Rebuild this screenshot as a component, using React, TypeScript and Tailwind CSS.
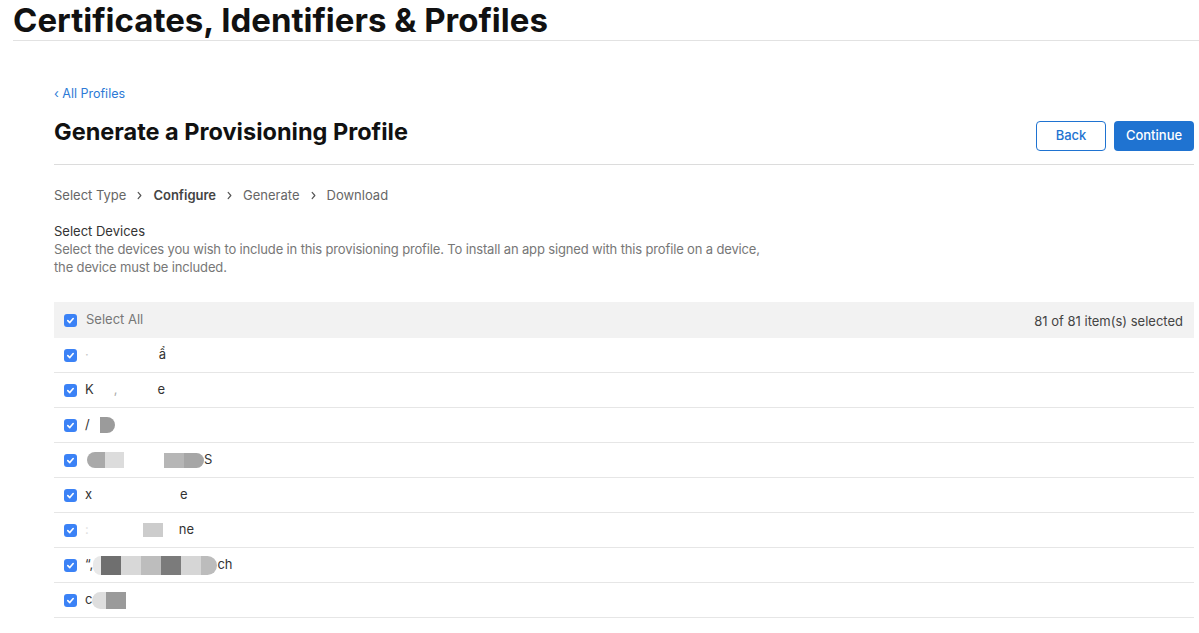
import React from "react";

type Seg =
  | { t: string; c?: string }
  | { gap: number }
  | { blocks: { w: number; c: string; r?: "l" | "r" }[]; h: number };

const rows: Seg[][] = [
  [{ t: "·", c: "text-[#c8c8c8]" }, { gap: 70 }, { t: "ẩ" }],
  [{ t: "K" }, { gap: 20 }, { t: ",", c: "text-[#aaa]" }, { gap: 40 }, { t: "e" }],
  [{ t: "/" }, { gap: 10 }, { blocks: [{ w: 15, c: "bg-[#9b9b9b]", r: "r" }], h: 16 }],
  [
    { gap: 2 },
    { blocks: [{ w: 18, c: "bg-[#a9a9a9]", r: "l" }, { w: 19, c: "bg-[#dcdcdc]" }], h: 16 },
    { gap: 40 },
    { blocks: [{ w: 20, c: "bg-[#b6b6b6]" }, { w: 20, c: "bg-[#a6a6a6]", r: "r" }], h: 15 },
    { t: "S" },
  ],
  [{ t: "x" }, { gap: 88 }, { t: "e" }],
  [{ t: ":", c: "text-[#e0e0e0]" }, { gap: 54 }, { blocks: [{ w: 20, c: "bg-[#cccccc]" }], h: 14 }, { gap: 16 }, { t: "ne" }],
  [
    { t: "“," },
    {
      blocks: [
        { w: 8, c: "bg-[#e8e8e8]", r: "l" },
        { w: 20, c: "bg-[#6f6f6f]" },
        { w: 20, c: "bg-[#d8d8d8]" },
        { w: 20, c: "bg-[#bdbdbd]" },
        { w: 20, c: "bg-[#7b7b7b]" },
        { w: 20, c: "bg-[#d6d6d6]" },
        { w: 16, c: "bg-[#bcbcbc]", r: "r" },
      ],
      h: 19,
    },
    { t: "ch" },
  ],
  [{ t: "c" }, { blocks: [{ w: 14, c: "bg-[#dedede]", r: "l" }, { w: 20, c: "bg-[#9a9a9a]" }], h: 17 }],
];

const gapClass: Record<number, string> = {
  2: "w-[2px]",
  10: "w-[10px]",
  16: "w-[16px]",
  20: "w-[20px]",
  40: "w-[40px]",
  54: "w-[54px]",
  70: "w-[70px]",
  88: "w-[88px]",
};

const blockW: Record<number, string> = {
  8: "w-[8px]",
  14: "w-[14px]",
  15: "w-[15px]",
  16: "w-[16px]",
  18: "w-[18px]",
  19: "w-[19px]",
  20: "w-[20px]",
};

const blockH: Record<number, string> = {
  14: "h-[14px]",
  15: "h-[15px]",
  16: "h-[16px]",
  17: "h-[17px]",
  19: "h-[19px]",
};

function Check() {
  return (
    <span className="w-[13px] h-[13px] rounded-[3px] bg-[#3b82f6] flex items-center justify-center shrink-0">
      <svg width="9" height="9" viewBox="0 0 10 10" fill="none" stroke="white" strokeWidth="1.8" strokeLinecap="round" strokeLinejoin="round">
        <polyline points="2,5.2 4.2,7.3 8,2.8" />
      </svg>
    </span>
  );
}

function Chevron() {
  return (
    <svg width="7" height="9" viewBox="0 0 7 10" fill="none" stroke="#555" strokeWidth="1.3" strokeLinecap="round" strokeLinejoin="round">
      <polyline points="2,1.5 5,5 2,8.5" />
    </svg>
  );
}

export default function App() {
  return (
    <div className="min-h-[633px] bg-white font-['Inter','Liberation_Sans',sans-serif] text-[#1d1d1f]">
      {/* Page title */}
      <div className="pl-[13px]">
        <h1 className="text-[33px] font-bold leading-[40px] text-[#111]">
          Certificates, Identifiers &amp; Profiles
        </h1>
        <div className="h-px bg-[#e2e2e2]" />
      </div>

      <div className="pl-[54px] pr-[5px]">
        <div className="pt-[45px] text-[12.5px] leading-[16px] text-[#2d7ad6]">‹ All Profiles</div>

        <div className="flex items-center justify-between mt-[14px] pb-[13px] border-b border-[#dcdcdc]">
          <h2 className="text-[23.5px] font-bold leading-[30px] text-[#111] mt-[-3px]">
            Generate a Provisioning Profile
          </h2>
          <div className="flex gap-2 mt-[5px]">
            <button className="h-[30px] w-[70px] rounded-[4px] border border-[#1f73d1] text-[#1f73d1] text-[13px] font-medium">
              Back
            </button>
            <button className="h-[30px] w-[80px] rounded-[4px] bg-[#1f73d1] text-white text-[13px] font-medium">
              Continue
            </button>
          </div>
        </div>

        {/* Steps */}
        <div className="flex items-center gap-[10px] mt-[21px] text-[13px] leading-[18px] text-[#666]">
          <span>Select Type</span>
          <Chevron />
          <span className="font-semibold text-[#444]">Configure</span>
          <Chevron />
          <span>Generate</span>
          <Chevron />
          <span>Download</span>
        </div>

        <div className="mt-[19px] text-[13px] leading-[17px] text-[#333]">Select Devices</div>
        <p className="text-[13px] leading-[18px] text-[#777] tracking-[-0.15px]">
          Select the devices you wish to include in this provisioning profile. To install an app signed with this profile on a device,
          <br />
          the device must be included.
        </p>

        {/* Devices table */}
        <div className="mt-[26px]">
          <div className="h-[36px] bg-[#f2f2f2] flex items-center justify-between pl-[10px] pr-[11px] text-[13px]">
            <div className="flex items-center gap-[9px]">
              <Check />
              <span className="text-[#777]">Select All</span>
            </div>
            <span className="text-[#444] mt-[3px]">81 of 81 item(s) selected</span>
          </div>
          {rows.map((segs, i) => (
            <div key={i} className="h-[35px] border-b border-[#e6e6e6] flex items-center pl-[10px] text-[13px] text-[#333]">
              <Check />
              <div className="flex items-center ml-[8px]">
                {segs.map((s, j) => {
                  if ("t" in s) return <span key={j} className={s.c ?? ""}>{s.t}</span>;
                  if ("gap" in s) return <span key={j} className={gapClass[s.gap]} />;
                  return (
                    <span key={j} className="flex">
                      {s.blocks.map((b, k) => (
                        <span
                          key={k}
                          className={`${blockW[b.w]} ${blockH[s.h]} ${b.c} ${b.r === "l" ? "rounded-l-full" : ""} ${b.r === "r" ? "rounded-r-full" : ""}`}
                        />
                      ))}
                    </span>
                  );
                })}
              </div>
            </div>
          ))}
        </div>
      </div>
    </div>
  );
}
